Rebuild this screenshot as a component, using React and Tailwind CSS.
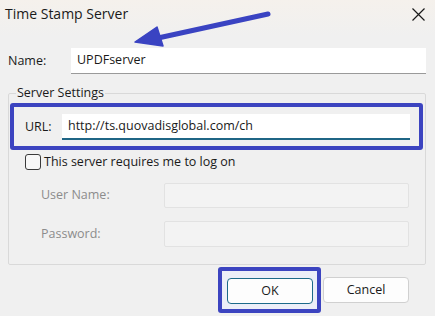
import React from 'react';

const font = { fontFamily: '"Open Sans", "Noto Sans", Arial, sans-serif' };

const CloseIcon = () => (
  <svg width="13" height="13" viewBox="0 0 13 13" className="block">
    <path d="M0.5 0.5 L12.5 12.5 M12.5 0.5 L0.5 12.5" stroke="#1a1a1a" strokeWidth="1.2" />
  </svg>
);

const Arrow = () => (
  <svg className="absolute left-0 top-0 pointer-events-none" width="435" height="60" viewBox="0 0 435 60">
    <path d="M268 14 L158 38" stroke="#3a43c2" strokeWidth="5" strokeLinecap="round" />
    <path d="M135 42 L157 27 L163 46 Z" fill="#3a43c2" stroke="#3a43c2" strokeWidth="1.5" strokeLinejoin="round" />
  </svg>
);

const App = () => {
  return (
    <div className="relative w-[435px] h-[316px] bg-[#f0f0f0] text-[#1a1a1a] overflow-hidden" style={font}>
      <div className="h-[36px] flex items-start justify-between pl-[5px] pr-[10px] pt-[3px] bg-gradient-to-b from-[#f5f1ec] to-[#f0f0f0]">
        <span className="text-[14px] leading-[22px]">Time Stamp Server</span>
        <span className="mt-[5px]"><CloseIcon /></span>
      </div>

      <div className="flex items-center mt-[12px] pl-[8px]">
        <span className="w-[63px] text-[12.5px]">Name:</span>
        <div className="w-[355px] h-[26px] bg-white border-b border-[#9a9a9a] flex items-center pl-[6px] text-[12.5px]">
          UPDFserver
        </div>
      </div>

      <fieldset className="ml-[8px] mt-[11px] w-[418px] h-[180px] border border-[#d9d9d9] rounded-[2px]">
        <legend className="ml-[7px] px-[1px] text-[12.5px] leading-[16px]">Server Settings</legend>

        <div className="ml-[1px] mt-[2px] w-[413px] border-[4px] border-[#3c44c0] rounded-[3px] flex items-center pl-[11px] pr-[9px] pt-[7px] pb-[6px]">
          <span className="w-[37px] text-[12.5px]">URL:</span>
          <div className="flex-1 h-[26px] bg-white border-b-2 border-[#1f6585] flex items-center pl-[6px] text-[12.5px]">
            http://ts.quovadisglobal.com/ch
          </div>
        </div>

        <div className="flex items-center mt-[3px] pl-[16px]">
          <span className="w-[16px] h-[16px] border border-[#3a3a3a] rounded-[3px] bg-[#f7f7f7]" />
          <span className="ml-[3px] text-[12.5px] leading-[18px]">This server requires me to log on</span>
        </div>

        <div className="flex items-center mt-[12px] pl-[32px]">
          <span className="w-[123px] text-[12.5px] text-[#8c8c8c]">User Name:</span>
          <div className="w-[245px] h-[25px] bg-[#f3f3f3] border border-[#e2e2e2] rounded-[2px]" />
        </div>

        <div className="flex items-center mt-[13px] pl-[32px]">
          <span className="w-[123px] text-[12.5px] text-[#8c8c8c]">Password:</span>
          <div className="w-[245px] h-[26px] bg-[#f3f3f3] border border-[#e2e2e2] rounded-[2px]" />
        </div>
      </fieldset>

      <div className="flex items-start mt-[2px] pl-[218px]">
        <div className="border-[4px] border-[#3c44c0] rounded-[3px] bg-[#eceef8] pl-[5px] pr-[4px] pt-[6px] pb-[5px]">
          <button className="w-[86px] h-[26px] bg-[#fdfdfd] border border-[#1d6a8a] rounded-[4px] text-[12.5px]">OK</button>
        </div>
        <button className="ml-[2px] mt-[10px] w-[86px] h-[26px] bg-[#fdfdfd] border border-[#d0d0d0] rounded-[4px] text-[12.5px]">Cancel</button>
      </div>

      <Arrow />
    </div>
  );
};

export default App;
